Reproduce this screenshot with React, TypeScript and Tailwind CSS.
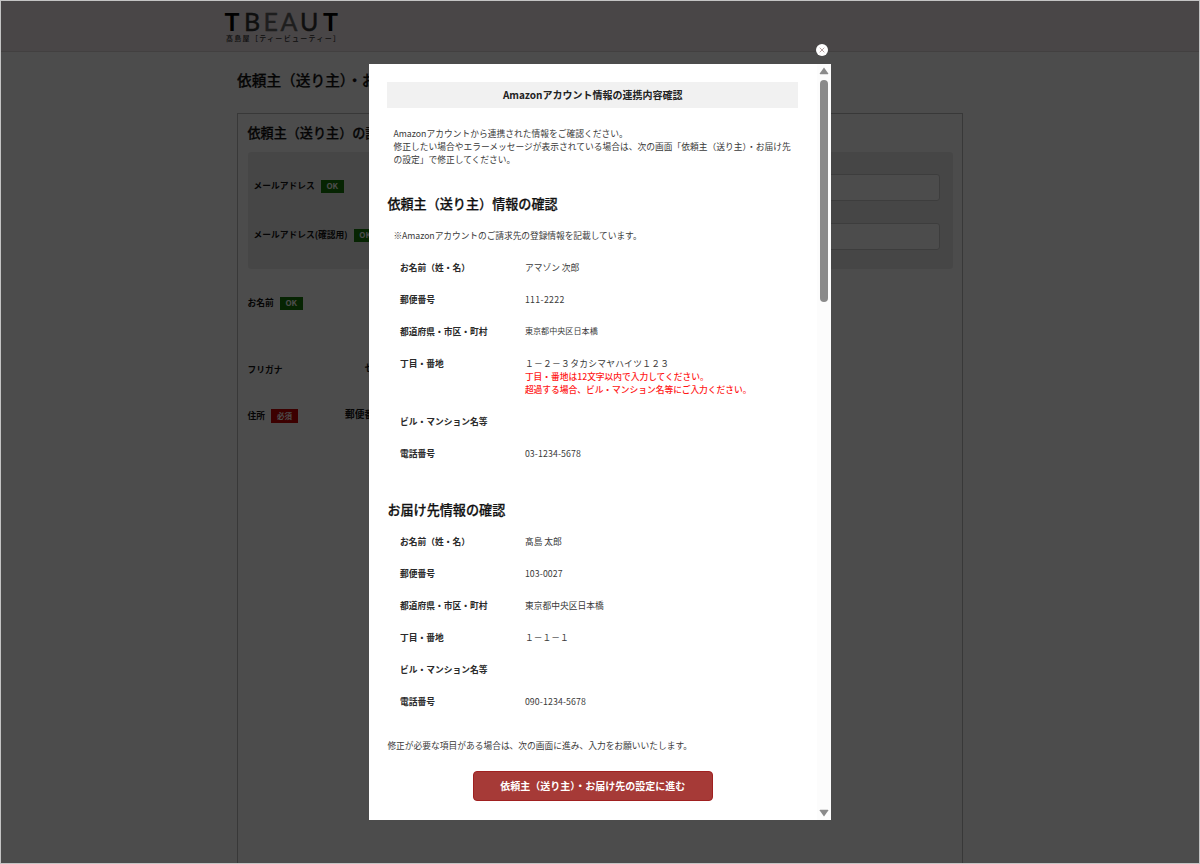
type Field = {
  label: string
  value?: string
  errors?: string[]
  valueClass?: string
}

const SENDER: Field[] = [
  { label: 'お名前（姓・名）', value: 'アマゾン 次郎' },
  { label: '郵便番号', value: '111-2222', valueClass: 'tracking-[0.35px]' },
  { label: '都道府県・市区・町村', value: '東京都中央区日本橋', valueClass: '-mt-px text-[8.1px]' },
  {
    label: '丁目・番地',
    value: '１－２－３タカシマヤハイツ１２３',
    valueClass: 'tracking-[0.3px]',
    errors: ['丁目・番地は12文字以内で入力してください。', '超過する場合、ビル・マンション名等にご入力ください。'],
  },
  { label: 'ビル・マンション名等' },
  { label: '電話番号', value: '03-1234-5678', valueClass: 'tracking-[0.12px]' },
]

const RECEIVER: Field[] = [
  { label: 'お名前（姓・名）', value: '髙島 太郎' },
  { label: '郵便番号', value: '103-0027', valueClass: 'tracking-[0.1px]' },
  { label: '都道府県・市区・町村', value: '東京都中央区日本橋' },
  { label: '丁目・番地', value: '１－１－１' },
  { label: 'ビル・マンション名等' },
  { label: '電話番号', value: '090-1234-5678', valueClass: 'tracking-[0.12px]' },
]

function FieldList({ fields }: { fields: Field[] }) {
  return (
    <dl className="pl-[12.5px] text-[8.75px] leading-[13px]">
      {fields.map((f) => (
        <div key={f.label} className="flex pb-[19px]">
          <dt className="w-[125px] shrink-0 font-bold text-[#2a2a2a]">{f.label}</dt>
          <dd className="whitespace-nowrap text-[#3a3a3a]">
            <p className={f.valueClass}>{f.value}</p>
            {f.errors?.map((e) => (
              <p key={e} className="font-medium tracking-[-0.03px] text-[#ff1818]">{e}</p>
            ))}
          </dd>
        </div>
      ))}
    </dl>
  )
}

function Badge({ text, required }: { text: string; required?: boolean }) {
  return (
    <span
      className={
        required
          ? 'flex h-[14px] w-[27px] items-center justify-center bg-[#c80000] text-[7.5px] font-bold text-white'
          : 'flex h-[13px] w-[23px] items-center justify-center bg-[#147808] text-[8px] font-bold text-white'
      }
    >
      {text}
    </span>
  )
}

function Logo() {
  return (
    <div className="pt-[9px] pl-[23px]">
      <svg className="overflow-visible" width="118" height="32" viewBox="0 0 118 32">
        <g fontFamily="Lato, sans-serif" fontSize="25">
          <text x="0.5" y="21" fontWeight="700" fill="#000" textLength="15" lengthAdjust="spacingAndGlyphs">T</text>
          <text x="20" y="21" fontWeight="400" fill="#333" stroke="#333" strokeWidth="0.4">B</text>
          <text x="39.5" y="21" fontWeight="400" fill="#666" stroke="#666" strokeWidth="0.4">E</text>
          <text x="56.5" y="21" fontWeight="400" fill="#666" stroke="#666" strokeWidth="0.4">A</text>
          <text x="76" y="21" fontWeight="400" fill="#333" stroke="#333" strokeWidth="0.4">U</text>
          <text x="99" y="21" fontWeight="700" fill="#000" textLength="15" lengthAdjust="spacingAndGlyphs">T</text>
        </g>
        <text x="2" y="30.5" fontSize="7" fontWeight="500" fill="#333" textLength="114">髙島屋［ティービューティー］</text>
      </svg>
    </div>
  )
}

function CheckoutPage() {
  return (
    <div className="h-full bg-white text-[#111]">
      <header className="h-[51px] border-b border-[#ddd6d8] bg-[#f4eaed] pl-[200px]">
        <Logo />
      </header>
      <main className="ml-[236px] w-[726px]">
        <h1 className="mt-[17px] text-[14.7px] leading-[22px] font-medium whitespace-nowrap [-webkit-text-stroke:0.25px]">
          依頼主（送り主）・お届け先の設定
        </h1>
        <section className="mt-[22px] h-[800px] border border-[#bbb] px-[9.5px] pt-[9px]">
          <h2 className="text-[13.1px] leading-5 font-medium [-webkit-text-stroke:0.25px]">依頼主（送り主）の設定</h2>
          <div className="mt-[9px] h-[117px] rounded-[3px] bg-[#ececec] pr-[13px] pl-[6px] pt-[22px] text-[8.75px] font-bold">
            <div className="flex h-[27px] items-center">
              <div className="flex items-center gap-[6px] pb-[3px]">
                <span>メールアドレス</span>
                <Badge text="OK" />
              </div>
              <div className="ml-auto h-[27px] w-[500px] rounded-[3px] border border-[#ccc] bg-[#fdfdfd]" />
            </div>
            <div className="mt-[22px] flex h-[27px] items-center">
              <div className="flex items-center gap-[6px] pb-[3px]">
                <span>メールアドレス(確認用)</span>
                <Badge text="OK" />
              </div>
              <div className="ml-auto h-[27px] w-[500px] rounded-[3px] border border-[#ccc] bg-[#fdfdfd]" />
            </div>
          </div>
          <div className="text-[8.75px] leading-[14px] font-bold">
            <div className="mt-[27px] flex items-center gap-[6px]">
              <span>お名前</span>
              <Badge text="OK" />
            </div>
            <div className="mt-[53px] flex">
              <span className="w-[117px]">フリガナ</span>
              <span className="-mt-[2px]">セイ</span>
            </div>
            <div className="mt-[32px] flex items-center">
              <span className="mr-[6px]">住所</span>
              <Badge text="必須" required />
              <span className="-mt-[5px] ml-[47px] text-[9.7px]">郵便番号</span>
            </div>
          </div>
        </section>
      </main>
    </div>
  )
}

function Scrollbar() {
  return (
    <div className="flex w-[14px] shrink-0 flex-col items-center bg-[#fcfcfc] pt-[3px] pb-[3px]">
      <svg width="10" height="8" viewBox="0 0 10 8" fill="#8a8a8a">
        <path d="M5 0.5 9.3 6.4Q9.4 7.2 8.6 7.2H1.4Q.6 7.2.7 6.4Z" />
      </svg>
      <div className="mt-[5px] h-[222px] w-[8px] rounded-full bg-[#8a8a8a]" />
      <svg className="mt-auto" width="10" height="8" viewBox="0 0 10 8" fill="#8a8a8a">
        <path d="M5 7.5.7 1.6Q.6.8 1.4.8H8.6Q9.4.8 9.3 1.6Z" />
      </svg>
    </div>
  )
}

function ConfirmModal() {
  return (
    <div className="absolute top-[64px] left-[369px] flex h-[756px] w-[462px] bg-white">
      <button
        aria-label="閉じる"
        className="absolute -top-[20.5px] left-[447px] flex size-[12px] items-center justify-center rounded-full bg-white"
      >
        <svg width="6" height="6" viewBox="0 0 6 6" stroke="#a08888" strokeWidth="0.8">
          <path d="M.7.7 5.3 5.3M5.3.7.7 5.3" />
        </svg>
      </button>
      <div className="w-[448px] pt-[18px] pr-[19px] pl-[18.4px]">
        <h1 className="flex h-[26px] items-center justify-center bg-[#f1f1f1] pb-[2px] text-[10px] font-bold text-[#222]">
          Amazonアカウント情報の連携内容確認
        </h1>
        <p className="mt-[18.5px] pl-[6px] text-[8.75px] leading-[13.2px] whitespace-nowrap text-[#3a3a3a]">
          Amazonアカウントから連携された情報をご確認ください。
          <br />
          修正したい場合やエラーメッセージが表示されている場合は、次の画面「依頼主（送り主）・お届け先
          <br />
          の設定」で修正してください。
        </p>
        <h2 className="mt-[27.5px] text-[13.1px] leading-5 font-medium text-[#111] [-webkit-text-stroke:0.25px]">
          依頼主（送り主）情報の確認
        </h2>
        <p className="mt-[15px] mb-[19px] pl-[6px] text-[8.75px] leading-[13px] tracking-[-0.08px] text-[#3a3a3a]">
          ※Amazonアカウントのご請求先の登録情報を記載しています。
        </p>
        <FieldList fields={SENDER} />
        <h2 className="mt-[21px] mb-[15px] text-[13.1px] leading-5 font-medium text-[#111] [-webkit-text-stroke:0.25px]">
          お届け先情報の確認
        </h2>
        <FieldList fields={RECEIVER} />
        <p className="mt-[12.4px] text-[8.75px] leading-[13px] tracking-[-0.02px] text-[#3a3a3a]">
          修正が必要な項目がある場合は、次の画面に進み、入力をお願いいたします。
        </p>
        <button className="mx-auto mt-[19px] flex h-[30px] w-[240px] items-center justify-center rounded-[4px] border border-[#a02020] bg-[#a63a37] pb-px text-[10px] font-bold text-white">
          依頼主（送り主）・お届け先の設定に進む
        </button>
      </div>
      <Scrollbar />
    </div>
  )
}

export default function App() {
  return (
    <div
      lang="ja"
      className="relative h-[864px] w-[1200px] overflow-hidden border border-[#c4c4c4] font-['Noto_Sans_CJK_JP',sans-serif]"
    >
      <CheckoutPage />
      <div className="absolute inset-0 bg-black/70" />
      <div className="absolute -top-px -left-px">
        <ConfirmModal />
      </div>
    </div>
  )
}
